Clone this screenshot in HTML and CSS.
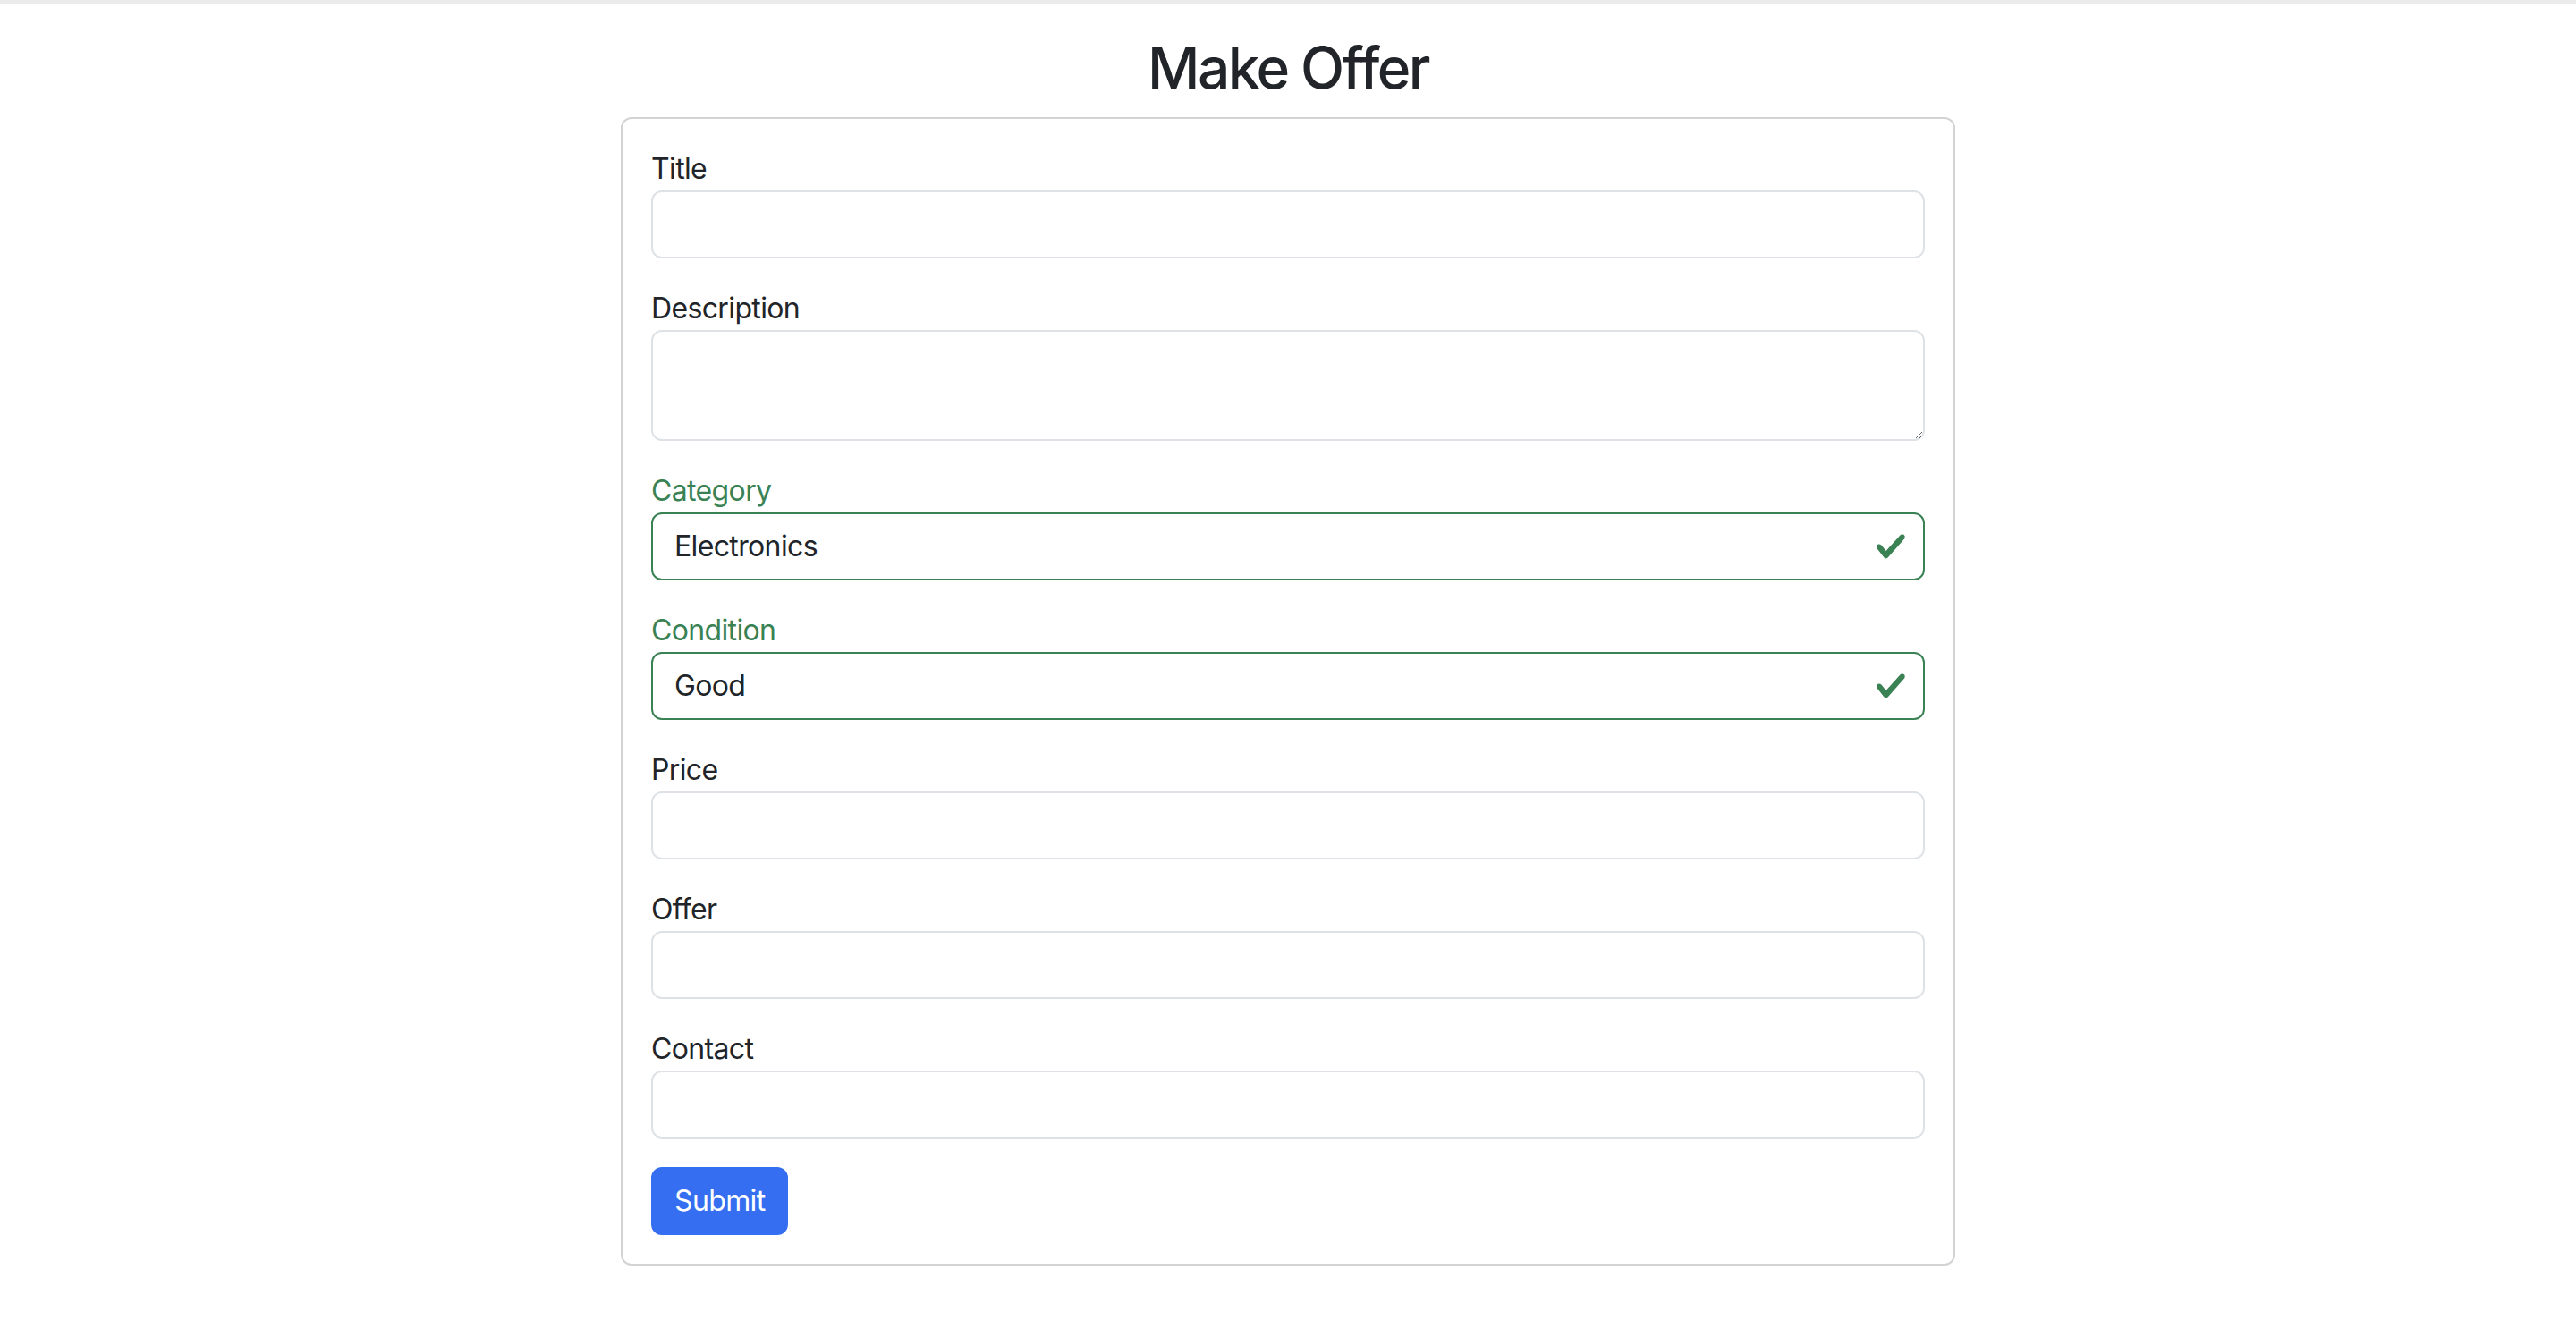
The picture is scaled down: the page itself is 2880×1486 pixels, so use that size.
FILE: index.html
```html
<!DOCTYPE html>
<html lang="en">
<head>
<meta charset="utf-8">
<title>Make Offer</title>
<link rel="stylesheet" href="styles.css">
</head>
<body>
<div class="topbar"></div>
<h2 class="page-title">Make Offer</h2>
<form class="card">
  <div class="field">
    <label for="title">Title</label>
    <input id="title" class="control" type="text">
  </div>
  <div class="field">
    <label for="desc">Description</label>
    <textarea id="desc" class="control textarea"></textarea>
  </div>
  <div class="field valid">
    <label for="cat">Category</label>
    <div class="control-wrap">
      <input id="cat" class="control" type="text" value="Electronics">
      <svg class="check" viewBox="0 0 8 8" width="36" height="36"><path fill="currentColor" d="M2.3 6.73.6 4.53c-.4-1.04.46-1.4 1.1-.8l1.1 1.4 3.4-3.8c.6-.63 1.6-.27 1.2.7l-4 4.6c-.43.5-.8.4-1.1.1z"/></svg>
    </div>
  </div>
  <div class="field valid">
    <label for="cond">Condition</label>
    <div class="control-wrap">
      <input id="cond" class="control" type="text" value="Good">
      <svg class="check" viewBox="0 0 8 8" width="36" height="36"><path fill="currentColor" d="M2.3 6.73.6 4.53c-.4-1.04.46-1.4 1.1-.8l1.1 1.4 3.4-3.8c.6-.63 1.6-.27 1.2.7l-4 4.6c-.43.5-.8.4-1.1.1z"/></svg>
    </div>
  </div>
  <div class="field">
    <label for="price">Price</label>
    <input id="price" class="control" type="text">
  </div>
  <div class="field">
    <label for="offer">Offer</label>
    <input id="offer" class="control" type="text">
  </div>
  <div class="field">
    <label for="contact">Contact</label>
    <input id="contact" class="control" type="text">
  </div>
  <div class="actions">
    <button type="button" class="btn">Submit</button>
  </div>
</form>
</body>
</html>
```
FILE: styles.css
```css
* { box-sizing: border-box; }
html, body {
  margin: 0;
  padding: 0;
  background: #ffffff;
}
body {
  font-family: Inter, "Noto Sans", "Liberation Sans", sans-serif;
  color: #212529;
  font-size: 32px;
  line-height: 48px;
  letter-spacing: -0.02em;
}
.topbar {
  height: 5px;
  background: #ebebeb;
}
.page-title {
  margin: 33px 0 16px;
  text-align: center;
  font-size: 64px;
  line-height: 1.2;
  font-weight: 500;
  letter-spacing: -0.04em;
  color: #212529;
}
.card {
  width: 1492px;
  margin: 0 auto;
  border: 2px solid #d3d3d3;
  border-radius: 12px;
  padding: 32px;
  display: flex;
  flex-direction: column;
}
.field {
  display: flex;
  flex-direction: column;
  margin-bottom: 32px;
}
.field label {
  display: block;
  font-size: 32px;
  line-height: 48px;
}
.control {
  display: block;
  width: 100%;
  height: 76px;
  margin: 0;
  padding: 12px 24px;
  font-family: inherit;
  font-size: 32px;
  line-height: 48px;
  letter-spacing: -0.02em;
  color: #212529;
  background: #ffffff;
  border: 2px solid #dee2e6;
  border-radius: 12px;
  outline: none;
}
.textarea {
  height: 124px;
  resize: vertical;
}
.control-wrap {
  position: relative;
}
.valid label { color: #3a8254; }
.valid .control {
  border-color: #3a8254;
  padding-right: 72px;
}
.check {
  position: absolute;
  right: 20px;
  top: 20px;
  color: #3a8254;
}
.actions {
  display: flex;
}
.btn {
  font-family: inherit;
  font-size: 32px;
  line-height: 48px;
  font-weight: 400;
  letter-spacing: -0.02em;
  color: #ffffff;
  background: #356ef0;
  border: 2px solid #356ef0;
  border-radius: 12px;
  padding: 12px 24px;
  cursor: pointer;
}
```
